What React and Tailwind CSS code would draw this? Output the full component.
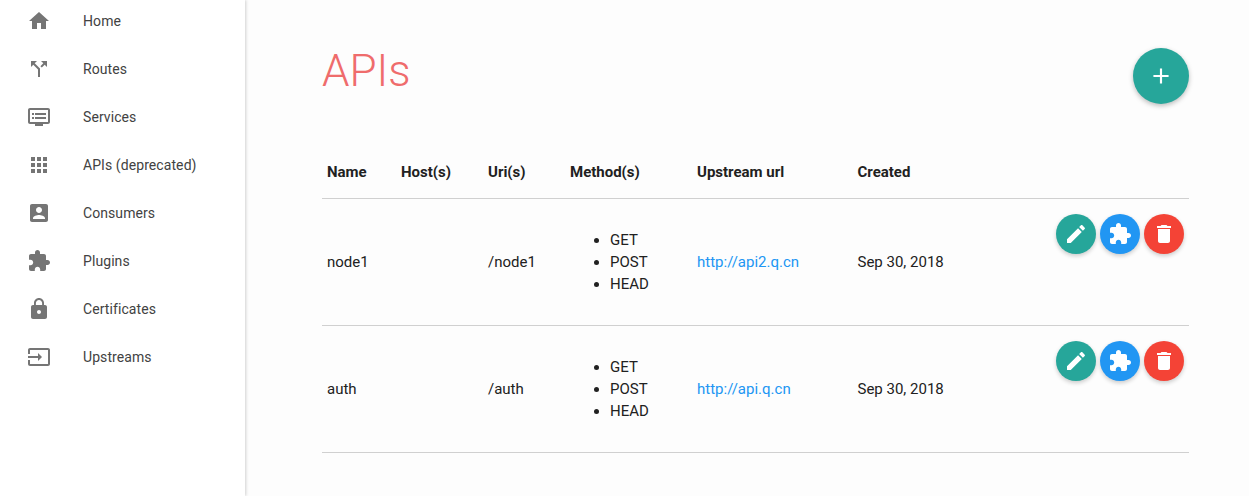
const ICONS = {
  home: 'M10 20v-6h4v6h5v-8h3L12 3 2 12h3v8z',
  split: 'M14 4l2.29 2.29-2.88 2.88 1.42 1.42 2.88-2.88L20 10V4zm-4 0H4v6l2.29-2.29 4.71 4.7V20h2v-8.41l-5.29-5.3z',
  dvr: 'M21 3H3c-1.1 0-2 .9-2 2v12c0 1.1.9 2 2 2h5v2h8v-2h5c1.1 0 1.99-.9 1.99-2L23 5c0-1.1-.9-2-2-2zm0 14H3V5h18v12zm-2-9H8v2h11V8zm0 4H8v2h11v-2zM7 8H5v2h2V8zm0 4H5v2h2v-2z',
  apps: 'M4 8h4V4H4v4zm6 12h4v-4h-4v4zm-6 0h4v-4H4v4zm0-6h4v-4H4v4zm6 0h4v-4h-4v4zm6-10v4h4V4h-4zm-6 4h4V4h-4v4zm6 6h4v-4h-4v4zm0 6h4v-4h-4v4z',
  account: 'M3 5v14c0 1.1.89 2 2 2h14c1.1 0 2-.9 2-2V5c0-1.1-.9-2-2-2H5c-1.11 0-2 .9-2 2zm12 4c0 1.66-1.34 3-3 3s-3-1.34-3-3 1.34-3 3-3 3 1.34 3 3zm-9 8c0-2 4-3.1 6-3.1s6 1.1 6 3.1v1H6v-1z',
  extension: 'M20.5 11H19V7c0-1.1-.9-2-2-2h-4V3.5C13 2.12 11.88 1 10.5 1S8 2.12 8 3.5V5H4c-1.1 0-1.99.9-1.99 2v3.8H3.5c1.49 0 2.7 1.21 2.7 2.7s-1.21 2.7-2.7 2.7H2V20c0 1.1.9 2 2 2h3.8v-1.5c0-1.49 1.21-2.7 2.7-2.7 1.49 0 2.7 1.21 2.7 2.7V22H17c1.1 0 2-.9 2-2v-4h1.5c1.38 0 2.5-1.12 2.5-2.5S21.88 11 20.5 11z',
  lock: 'M18 8h-1V6c0-2.76-2.24-5-5-5S7 3.24 7 6v2H6c-1.1 0-2 .9-2 2v10c0 1.1.9 2 2 2h12c1.1 0 2-.9 2-2V10c0-1.1-.9-2-2-2zm-6 9c-1.1 0-2-.9-2-2s.9-2 2-2 2 .9 2 2-.9 2-2 2zm3.1-9H8.9V6c0-1.71 1.39-3.1 3.1-3.1 1.71 0 3.1 1.39 3.1 3.1v2z',
  input: 'M21 3.01H3c-1.1 0-2 .9-2 2V9h2V4.99h18v14.03H3V15H1v4.01c0 1.1.9 1.98 2 1.98h18c1.1 0 2-.88 2-1.98v-14c0-1.11-.9-2-2-2zM11 16l4-4-4-4v3H1v2h10v3z',
  edit: 'M3 17.25V21h3.75L17.81 9.94l-3.75-3.75L3 17.25zM20.71 7.04c.39-.39.39-1.02 0-1.41l-2.34-2.34c-.39-.39-1.02-.39-1.41 0l-1.83 1.83 3.75 3.75 1.83-1.83z',
  trash: 'M6 19c0 1.1.9 2 2 2h8c1.1 0 2-.9 2-2V7H6v12zM19 4h-3.5l-1-1h-5l-1 1H5v2h14V4z',
  add: 'M19 13h-6v6h-2v-6H5v-2h6V5h2v6h6v2z',
};

function Icon({ name, className }) {
  return (
    <svg viewBox="0 0 24 24" fill="currentColor" className={className}>
      <path d={ICONS[name]} />
    </svg>
  );
}

const NAV = [
  ['home', 'Home'],
  ['split', 'Routes'],
  ['dvr', 'Services'],
  ['apps', 'APIs (deprecated)'],
  ['account', 'Consumers'],
  ['extension', 'Plugins'],
  ['lock', 'Certificates'],
  ['input', 'Upstreams'],
];

const APIS = [
  { name: 'node1', uri: '/node1', url: 'http://api2.q.cn' },
  { name: 'auth', uri: '/auth', url: 'http://api.q.cn' },
];

function RoundButton({ icon, color }) {
  return (
    <button className={`w-10 h-10 rounded-full flex items-center justify-center text-white shadow-[0_2px_4px_rgba(0,0,0,0.2)] ${color}`}>
      <Icon name={icon} className="w-6 h-6" />
    </button>
  );
}

export default function App() {
  return (
    <div className="flex h-[496px] overflow-hidden bg-[#fdfdfd] font-['Roboto',sans-serif]">
      {/* Sidebar */}
      <aside className="w-[245px] shrink-0 bg-white shadow-[1px_0_3px_rgba(0,0,0,0.18)] z-10 overflow-hidden">
        <ul className="-mt-[3px]">
          {NAV.map(([icon, label]) => (
            <li key={label} className="h-12 flex items-center pl-[27px] gap-8 text-sm tracking-[0.08px] text-[#424242]">
              <Icon name={icon} className="w-6 h-6 text-[#757575]" />
              <span>{label}</span>
            </li>
          ))}
        </ul>
      </aside>

      {/* Main */}
      <main className="flex-1 pl-[77px] pr-[60px]">
        <div className="h-[149px] flex items-start justify-between">
          <h1 className="mt-[43px] text-[44px] leading-[56px] font-light text-[#ef6c6c]">APIs</h1>
          <button className="mt-12 w-14 h-14 rounded-full bg-[#26a69a] text-white flex items-center justify-center shadow-[0_2px_5px_rgba(0,0,0,0.26)]">
            <Icon name="add" className="w-[26px] h-[26px]" />
          </button>
        </div>

        <table className="w-full table-fixed text-[15px] text-[#212121]">
          <colgroup>
            <col className="w-[74px]" />
            <col className="w-[87px]" />
            <col className="w-[82px]" />
            <col className="w-[127px]" />
            <col className="w-[160.5px]" />
            <col className="w-[150px]" />
            <col />
          </colgroup>
          <thead>
            <tr className="h-[49px] border-b border-[#d0d0d0] text-left">
              <th className="px-[5px] pb-[2px] font-bold">Name</th>
              <th className="px-[5px] pb-[2px] font-bold">Host(s)</th>
              <th className="px-[5px] pb-[2px] font-bold">Uri(s)</th>
              <th className="px-[5px] pb-[2px] font-bold">Method(s)</th>
              <th className="px-[5px] pb-[2px] font-bold">Upstream url</th>
              <th className="px-[5px] pb-[2px] font-bold">Created</th>
              <th />
            </tr>
          </thead>
          <tbody>
            {APIS.map((api) => (
              <tr key={api.name} className="h-[127px] border-b border-[#d0d0d0]">
                <td className="px-[5px] pt-[2px]">{api.name}</td>
                <td className="px-[5px]" />
                <td className="px-[5px] pt-[2px]">{api.uri}</td>
                <td className="px-[5px]">
                  <ul className="list-disc pl-[40px] leading-[22px]">
                    <li>GET</li>
                    <li>POST</li>
                    <li>HEAD</li>
                  </ul>
                </td>
                <td className="px-[5px] pt-[2px]">
                  <a href="#" className="text-[#2196f3]">{api.url}</a>
                </td>
                <td className="px-[5px] pt-[2px]">Sep 30, 2018</td>
                <td className="align-top pt-[15px]">
                  <div className="flex justify-end gap-1 pr-[5px]">
                    <RoundButton icon="edit" color="bg-[#26a69a]" />
                    <RoundButton icon="extension" color="bg-[#2196f3]" />
                    <RoundButton icon="trash" color="bg-[#f44336]" />
                  </div>
                </td>
              </tr>
            ))}
          </tbody>
        </table>
      </main>
    </div>
  );
}
